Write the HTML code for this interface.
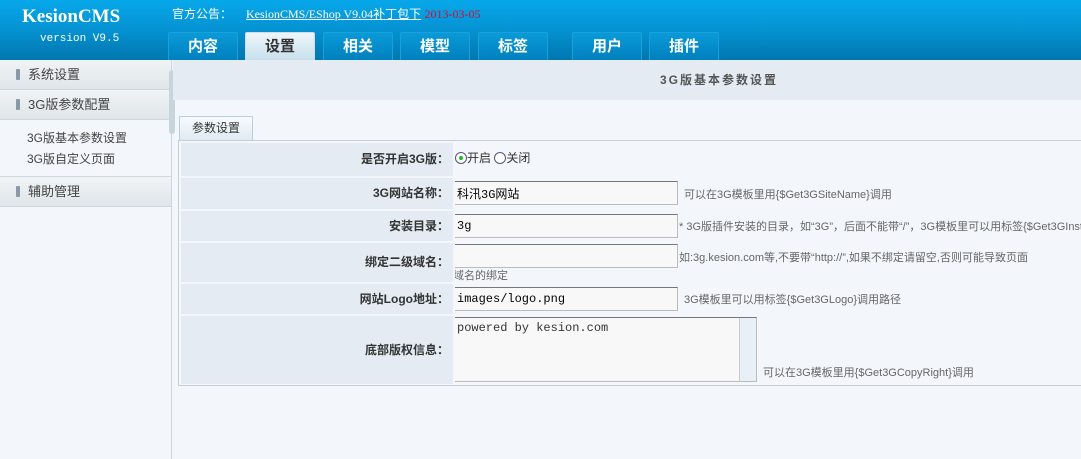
<!DOCTYPE html><html><head><meta charset="utf-8"><style>
*{margin:0;padding:0;box-sizing:border-box}
body{width:1081px;height:459px;overflow:hidden;background:#f3f6fa;font-family:"Liberation Sans","Noto Sans CJK SC",sans-serif;font-size:12px;color:#333;position:relative}
.hd{position:absolute;left:0;top:0;width:1081px;height:60px;background:linear-gradient(#06a8ea,#0592d2 50%,#0077ae)}
.logo{position:absolute;left:22px;top:6px;color:#fff;font:bold 19px "Liberation Serif",serif}
.ver{position:absolute;left:40px;top:33px;color:#fff;font:11px "Liberation Mono",monospace}
.ann{position:absolute;left:172px;top:5px;color:#fff;font-size:12px}
.ann a{color:#fff;text-decoration:underline;font-family:"Liberation Serif","Noto Sans CJK SC",serif;margin-left:14px}
.ann span{color:#d0103a;font-family:"Liberation Serif",serif}
.tab{position:absolute;top:32px;width:70px;height:28px;border:1px solid #1aa0dc;border-bottom:none;border-radius:2px 2px 0 0;background:linear-gradient(#0a9ad8,#0080be);color:#fff;font-weight:bold;font-size:15px;text-align:center;line-height:27px}
.tab.on{background:linear-gradient(#eef6fa,#c8e0ec);color:#333;border-color:#cde}
.side{position:absolute;left:0;top:60px;width:172px;height:399px;background:#f3f6fa;border-right:1px solid #cdd6de}
.m{height:30px;border-bottom:1px solid #cfd8df;background:linear-gradient(#f1f4f6,#dfe5e9);font-size:13px;color:#444;line-height:29px;padding-left:28px;position:relative}
.m:before{content:"";position:absolute;left:16px;top:9px;width:4px;height:11px;background:#8a99a5;border-radius:1px}
.sub{padding:8px 0 6px 27px;line-height:21px;font-size:12px;color:#444;border-bottom:1px solid #cfd8df}
.sb{position:absolute;left:169px;top:70px;width:6px;height:64px;background:#c8d4dc;border-radius:3px}
.band{position:absolute;left:173px;top:60px;width:908px;height:40px;background:#e4ebf2;text-align:center;line-height:40px;font-weight:bold;color:#555;letter-spacing:2px;padding-left:184px}
.ptab{position:absolute;left:179px;top:116px;width:74px;height:25px;border:1px solid #b8cfe0;border-bottom:none;background:linear-gradient(#f8fbfd,#dde9f2);text-align:center;line-height:22px;font-size:12px}
.tbl{position:absolute;left:178px;top:140px;width:910px;height:246px;border:1px solid #c8d0d6;background:#f3f6fa}
.row{position:absolute;left:2px;right:0;white-space:nowrap}
.row .l{position:absolute;left:0;top:0;bottom:0;width:272px;background:#e4ebf2;text-align:right;font-weight:bold;padding-right:4px;font-size:12px;color:#333}
.row .v{position:absolute;left:274px;top:0;bottom:0;right:0;background:#f3f7fb;white-space:nowrap;overflow:hidden}
input.t{position:absolute;left:-2px;width:225px;height:24px;border:1px solid #bbb;border-top-color:#777;border-left-color:#777;background:#f8f8f8;font:12px "Liberation Mono","Noto Sans CJK SC",monospace;padding:0 3px}
.h{position:absolute;color:#666;font-size:11px}
.r{display:inline-block;width:12px;height:12px;border:1px solid #557;border-radius:50%;vertical-align:-2px;position:relative;background:#fff}
.r.on:after{content:"";position:absolute;left:3px;top:3px;width:4px;height:4px;border-radius:50%;background:#2b2}
</style></head><body>
<div class="hd"></div>
<div class="logo">KesionCMS</div><div class="ver">version V9.5</div>
<div class="ann">官方公告：<a>KesionCMS/EShop V9.04补丁包下</a> <span>2013-03-05</span></div>
<div class="tab" style="left:168px">内容</div><div class="tab on" style="left:245px">设置</div><div class="tab" style="left:323px">相关</div><div class="tab" style="left:400px">模型</div><div class="tab" style="left:478px">标签</div><div class="tab" style="left:572px">用户</div><div class="tab" style="left:649px">插件</div>
<div class="side"><div class="m">系统设置</div><div class="m">3G版参数配置</div><div class="sub">3G版基本参数设置<br>3G版自定义页面</div><div class="m">辅助管理</div></div>
<div class="sb"></div>
<div class="band">3G版基本参数设置</div>
<div class="ptab">参数设置</div>
<div class="tbl">
<div class="row" style="top:2px;height:33px"><div class="l" style="line-height:33px">是否开启3G版：</div><div class="v" style="line-height:31px"><span class="r on"></span>开启 <span class="r"></span>关闭</div></div>
<div class="row" style="top:37px;height:31px"><div class="l" style="line-height:31px">3G网站名称：</div><div class="v"><input class="t" style="top:3px" value="科汛3G网站"><span class="h" style="left:229px;top:8px">可以在3G模板里用{$Get3GSiteName}调用</span></div></div>
<div class="row" style="top:70px;height:30px"><div class="l" style="line-height:30px">安装目录：</div><div class="v"><input class="t" style="top:3px" value="3g"><span class="h" style="left:224px;top:7px">* 3G版插件安装的目录，如“3G”，后面不能带“/”，3G模板里可以用标签{$Get3GInstallDir}</span></div></div>
<div class="row" style="top:102px;height:39px"><div class="l" style="line-height:39px">绑定二级域名：</div><div class="v"><input class="t" style="top:1px"><span class="h" style="left:224px;top:6px">如:3g.kesion.com等,不要带“http://”,如果不绑定请留空,否则可能导致页面</span><span class="h" style="left:-2px;top:24px">域名的绑定</span></div></div>
<div class="row" style="top:143px;height:30px"><div class="l" style="line-height:30px">网站Logo地址：</div><div class="v"><input class="t" style="top:3px" value="images/logo.png"><span class="h" style="left:229px;top:7px">3G模板里可以用标签{$Get3GLogo}调用路径</span></div></div>
<div class="row" style="top:175px;height:68px"><div class="l" style="line-height:68px">底部版权信息：</div><div class="v"><div style="position:absolute;left:-2px;top:1px;width:304px;height:65px;border:1px solid #777;border-right-color:#bbb;border-bottom-color:#bbb;background:#f8f8f8;font:12px 'Liberation Mono',monospace;padding:3px 3px">powered by kesion.com<div style="position:absolute;right:0;top:0;width:17px;height:63px;background:#e8eff6;border-left:1px solid #ccc"></div></div><span class="h" style="left:308px;top:48px">可以在3G模板里用{$Get3GCopyRight}调用</span></div></div>
</div>
</body></html>
